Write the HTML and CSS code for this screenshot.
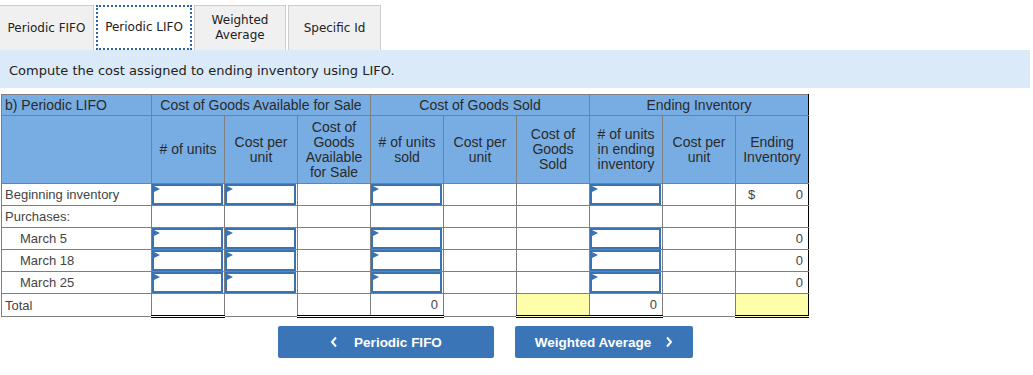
FILE: index.html
```html
<!DOCTYPE html>
<html>
<head>
<meta charset="utf-8">
<link rel="stylesheet" href="styles.css">
</head>
<body>
<div class="tabs">
  <div class="tab">Periodic FIFO</div>
  <div class="tab active">Periodic LIFO</div>
  <div class="tab">Weighted<br>Average</div>
  <div class="tab tab-spec">Specific Id</div>
</div>
<div class="banner">Compute the cost assigned to ending inventory using LIFO.</div>
<table class="grid">
  <colgroup>
    <col class="c-label"><col class="c-num"><col class="c-num"><col class="c-num"><col class="c-num"><col class="c-num"><col class="c-num"><col class="c-num"><col class="c-num"><col class="c-num">
  </colgroup>
  <thead>
    <tr class="h1">
      <th class="lab">b) Periodic LIFO</th>
      <th colspan="3" class="gl">Cost of Goods Available for Sale</th>
      <th colspan="3" class="gl">Cost of Goods Sold</th>
      <th colspan="3" class="gl gr">Ending Inventory</th>
    </tr>
    <tr class="h2">
      <th class="lab"></th>
      <th class="gl"># of units</th>
      <th>Cost per<br>unit</th>
      <th>Cost of<br>Goods<br>Available<br>for Sale</th>
      <th class="gl"># of units<br>sold</th>
      <th>Cost per<br>unit</th>
      <th>Cost of<br>Goods<br>Sold</th>
      <th class="gl"># of units<br>in ending<br>inventory</th>
      <th>Cost per<br>unit</th>
      <th class="gr">Ending<br>Inventory</th>
    </tr>
  </thead>
  <tbody>
    <tr>
      <td class="lab">Beginning inventory</td>
      <td class="gl"><div class="inp"></div></td>
      <td><div class="inp"></div></td>
      <td></td>
      <td class="gl"><div class="inp"></div></td>
      <td></td>
      <td></td>
      <td class="gl"><div class="inp"></div></td>
      <td></td>
      <td class="gr val"><span class="cur">$</span><span class="amt">0</span></td>
    </tr>
    <tr>
      <td class="lab">Purchases:</td>
      <td class="gl"></td><td></td><td></td>
      <td class="gl"></td><td></td><td></td>
      <td class="gl"></td><td></td><td class="gr"></td>
    </tr>
    <tr>
      <td class="lab ind">March 5</td>
      <td class="gl"><div class="inp"></div></td>
      <td><div class="inp"></div></td>
      <td></td>
      <td class="gl"><div class="inp"></div></td>
      <td></td>
      <td></td>
      <td class="gl"><div class="inp"></div></td>
      <td></td>
      <td class="gr num">0</td>
    </tr>
    <tr>
      <td class="lab ind">March 18</td>
      <td class="gl"><div class="inp"></div></td>
      <td><div class="inp"></div></td>
      <td></td>
      <td class="gl"><div class="inp"></div></td>
      <td></td>
      <td></td>
      <td class="gl"><div class="inp"></div></td>
      <td></td>
      <td class="gr num">0</td>
    </tr>
    <tr>
      <td class="lab ind">March 25</td>
      <td class="gl"><div class="inp"></div></td>
      <td><div class="inp"></div></td>
      <td></td>
      <td class="gl"><div class="inp"></div></td>
      <td></td>
      <td></td>
      <td class="gl"><div class="inp"></div></td>
      <td></td>
      <td class="gr num">0</td>
    </tr>
    <tr class="total">
      <td class="lab">Total</td>
      <td class="gl dbl"></td>
      <td></td>
      <td class="dbl tt"></td>
      <td class="gl dbl num">0</td>
      <td></td>
      <td class="dbl tt yel"></td>
      <td class="gl dbl num">0</td>
      <td></td>
      <td class="gr dbl tt yel"></td>
    </tr>
  </tbody>
</table>
<div class="nav">
  <button class="btn btn-prev"><svg class="chev chev-l" width="8" height="12" viewBox="0 0 8 12"><polyline points="6,1.5 2,6 6,10.5" fill="none" stroke="#fff" stroke-width="2"/></svg>Periodic FIFO</button>
  <button class="btn btn-next">Weighted Average<svg class="chev chev-r" width="8" height="12" viewBox="0 0 8 12"><polyline points="2,1.5 6,6 2,10.5" fill="none" stroke="#fff" stroke-width="2"/></svg></button>
</div>
</body>
</html>
```
FILE: styles.css
```css
html, body {
  margin: 0;
  padding: 0;
  background: #ffffff;
}
body {
  font-family: "Liberation Sans", Arial, sans-serif;
  color: #333;
}
.tabs {
  display: flex;
  align-items: flex-end;
  gap: 2px;
  padding-top: 5px;
  height: 45px;
}
.tab {
  box-sizing: border-box;
  height: 45px;
  padding: 0 4px;
  display: flex;
  align-items: center;
  justify-content: center;
  text-align: center;
  background: #f0f0f0;
  border: 1px solid #cccccc;
  border-bottom: none;
  font-family: "DejaVu Sans", Verdana, sans-serif;
  font-size: 12px;
  line-height: 15px;
  color: #222;
}
.tab:first-child {
  width: 94px;
  border-left: none;
}
.tab.active {
  width: 96px;
  background: #ffffff;
  border: 2px dotted #2f63a8;
}
.tab:nth-child(3) {
  width: 92px;
}
.tab.tab-spec {
  width: 93px;
}
.banner {
  box-sizing: border-box;
  width: 1030px;
  height: 38px;
  background: #dbeaf8;
  font-family: "DejaVu Sans", Verdana, sans-serif;
  font-size: 13px;
  color: #222;
  padding: 13px 0 0 9px;
}
.grid {
  margin-top: 6px;
  margin-left: 1px;
  border-collapse: collapse;
  table-layout: fixed;
  width: 808px;
  font-size: 13px;
}
.c-label { width: 150px; }
.c-num { width: 73px; }
.grid th, .grid td {
  border: 1px solid #7f7f7f;
  padding: 0;
}
.grid th {
  background: #78ade3;
  color: #2a2a2a;
  font-weight: normal;
  font-size: 14px;
  text-align: center;
  line-height: 15px;
}
.h1 th {
  height: 20px;
}
.h1 th.lab {
  text-align: left;
  padding-left: 3px;
}
.h2 th {
  height: 67px;
  vertical-align: middle;
}
.grid .gl { border-left: 1px solid #000; }
.grid .gr { border-right: 1px solid #000; }
.grid td {
  height: 21px;
  background: #ffffff;
  color: #444;
  font-size: 13px;
}
.grid td.lab {
  padding-left: 3px;
}
.grid td.ind {
  padding-left: 18px;
}
.grid td.num {
  text-align: right;
  padding-right: 5px;
}
.grid td.val {
  padding: 0 5px 0 12px;
}
.cur {
  float: left;
}
.amt {
  float: right;
}
.inp {
  box-sizing: border-box;
  height: 21px;
  margin: 0 1px 0 0;
  border: 2px solid #3a73b3;
  position: relative;
}
.inp::before {
  content: "";
  position: absolute;
  left: 0;
  top: 0;
  border-left: 6px solid #3a73b3;
  border-top: 3px solid transparent;
  border-bottom: 3px solid transparent;
  width: 0;
  height: 0;
}
.grid td.dbl {
  border-bottom: 3px double #000;
}
.grid td.tt {
  border-top: 1px solid #000;
}
.grid td.yel {
  background: #ffffaa;
}
.nav {
  display: flex;
  gap: 21px;
  padding: 8px 0 0 278px;
}
.btn {
  height: 32px;
  border: none;
  border-radius: 2px;
  background: #3a75b8;
  color: #ffffff;
  font-family: "Liberation Sans", Arial, sans-serif;
  font-weight: bold;
  font-size: 13.5px;
  display: flex;
  align-items: center;
  justify-content: center;
  padding: 0;
}
.btn-prev {
  width: 216px;
}
.btn-next {
  width: 178px;
}
.chev {
  display: block;
}
.chev-l { margin-right: 16px; }
.chev-r { margin-left: 14px; }
```
